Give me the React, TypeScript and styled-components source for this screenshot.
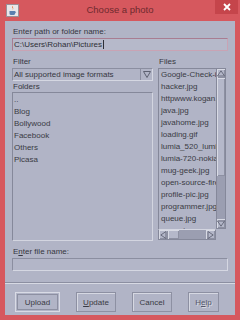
import React from 'react';
import styled, { createGlobalStyle } from 'styled-components';

const GlobalStyle = createGlobalStyle`
  html, body {
    margin: 0;
    padding: 0;
    background: #d6585e;
  }
  body {
    font-family: "Liberation Sans", Arial, sans-serif;
  }
`;

const folders = ['..', 'Blog', 'Bollywood', 'Facebook', 'Others', 'Picasa'];
const files = [
  'Google-Check-in.jpg',
  'hacker.jpg',
  'httpwww.kogan.jpg',
  'java.jpg',
  'javahome.jpg',
  'loading.gif',
  'lumia_520_lumia.jpg',
  'lumia-720-nokia.jpg',
  'mug-geek.jpg',
  'open-source-firefox.jpg',
  'profile-pic.jpg',
  'programmer.jpg',
  'queue.jpg',
  'regex.jpg',
];

const JavaIcon = () => (
  <svg width="13" height="13" viewBox="0 0 13 13">
    <rect x="0.5" y="0.5" width="12" height="12" fill="#e9e6ea" stroke="#9a8f98" />
    <path d="M6.5 2 C5 3.5 8 4 6.5 6 C7.8 5 7.2 3.8 6.5 2 Z" fill="#e2672c" />
    <path d="M3.5 7 H9 V9.5 Q9 11 7.5 11 H5 Q3.5 11 3.5 9.5 Z" fill="#5a7fb0" />
    <path d="M9 7.5 Q10.6 7.8 9 9.4" fill="none" stroke="#5a7fb0" strokeWidth="0.8" />
  </svg>
);

const App = () => {
  return (
    <Window>
      <GlobalStyle />
      <TitleBar>
        <IconSlot>
          <JavaIcon />
        </IconSlot>
        <Title>Choose a photo</Title>
        <CloseButton>
          <svg width="8" height="8" viewBox="0 0 8 8">
            <path d="M1 1 L7 7 M7 1 L1 7" stroke="#fff" strokeWidth="1.8" />
          </svg>
        </CloseButton>
      </TitleBar>

      <Body>
        <Form>
          <Label>Enter path or folder name:</Label>
          <PathInput>
            C:\Users\Rohan\Pictures<Caret />
          </PathInput>

          <Columns>
            <Column>
              <Label>Filter</Label>
              <Combo>
                <ComboText>All supported image formats</ComboText>
                <ComboArrow>
                  <svg width="8" height="7" viewBox="0 0 8 7">
                    <path d="M0.5 0.5 H7.5 L4 6.5 Z" fill="none" stroke="#5d6070" strokeWidth="1" />
                  </svg>
                </ComboArrow>
              </Combo>
              <Label>Folders</Label>
              <ListBox>
                {folders.map((f) => (
                  <Item key={f}>{f}</Item>
                ))}
              </ListBox>
            </Column>

            <Column>
              <Label>Files</Label>
              <FilesPane>
                <FileList>
                  {files.map((f) => (
                    <Item key={f}>{f}</Item>
                  ))}
                </FileList>
                <VScroll>
                  <ArrowBtn>
                    <svg width="8" height="7" viewBox="0 0 8 7">
                      <path d="M0.5 6 H7.5 L4 0.8 Z" fill="none" stroke="#6a6d7e" />
                    </svg>
                  </ArrowBtn>
                  <VThumb />
                  <Track />
                  <ArrowBtn>
                    <svg width="8" height="7" viewBox="0 0 8 7">
                      <path d="M0.5 1 H7.5 L4 6.2 Z" fill="none" stroke="#6a6d7e" />
                    </svg>
                  </ArrowBtn>
                </VScroll>
                <HScroll>
                  <ArrowBtn>
                    <svg width="7" height="8" viewBox="0 0 7 8">
                      <path d="M6 0.5 V7.5 L0.8 4 Z" fill="none" stroke="#6a6d7e" />
                    </svg>
                  </ArrowBtn>
                  <HThumb />
                  <Track />
                  <ArrowBtn>
                    <svg width="7" height="8" viewBox="0 0 7 8">
                      <path d="M1 0.5 V7.5 L6.2 4 Z" fill="none" stroke="#6a6d7e" />
                    </svg>
                  </ArrowBtn>
                </HScroll>
                <Corner />
              </FilesPane>
            </Column>
          </Columns>

          <FileLabel>
            E<u>n</u>ter file name:
          </FileLabel>
          <NameInput />
        </Form>

        <Separator />

        <ButtonRow>
          <Button $w={45} $focused>
            Upload
          </Button>
          <Button $w={40}>
            <u>U</u>pdate
          </Button>
          <Button $w={40}>Cancel</Button>
          <Button $w={31} $disabled>
            H<u>e</u>lp
          </Button>
        </ButtonRow>
      </Body>
    </Window>
  );
};

export default App;

const Window = styled.div`
  width: 240px;
  height: 320px;
  display: flex;
  flex-direction: column;
  background: #d6585e;
  overflow: hidden;
`;

const TitleBar = styled.div`
  height: 21px;
  display: flex;
  align-items: flex-start;
  position: relative;
  flex-shrink: 0;
`;

const IconSlot = styled.div`
  padding: 4px 0 0 6px;
  display: flex;
`;

const Title = styled.div`
  position: absolute;
  left: 0;
  right: 0;
  top: 4px;
  text-align: center;
  font-family: "Liberation Sans", Arial, sans-serif;
  font-size: 9.5px;
  color: #6e2a2e;
`;

const CloseButton = styled.div`
  margin-left: auto;
  margin-right: 2px;
  width: 23px;
  height: 14px;
  background: #c5454b;
  display: flex;
  align-items: center;
  justify-content: center;
`;

const Body = styled.div`
  flex: 1;
  margin: 0 5px 5px;
  background: #b1b4c6;
  display: flex;
  flex-direction: column;
  color: #36373f;
  font-size: 8px;
`;

const Form = styled.div`
  padding: 6px 7px 0 7px;
  display: flex;
  flex-direction: column;
`;

const Label = styled.div`
  height: 10px;
  line-height: 10px;
  padding-left: 1px;
  white-space: nowrap;
`;

const FileLabel = styled(Label)`
  margin-top: 6px;
  u {
    text-decoration-thickness: 1px;
  }
`;

const PathInput = styled.div`
  margin-top: 1px;
  height: 13px;
  box-sizing: border-box;
  border: 1px solid #a87d92;
  border-right-color: #c9a3b4;
  border-bottom-color: #c9a3b4;
  background: #b6b9ca;
  line-height: 11px;
  padding-left: 1px;
  display: flex;
  align-items: center;
  color: #2e2f36;
`;

const Caret = styled.span`
  display: inline-block;
  width: 1px;
  height: 9px;
  background: #2e2f36;
  margin-left: 1px;
`;

const NameInput = styled.div`
  margin-top: 1px;
  height: 13px;
  box-sizing: border-box;
  border: 1px solid #8b8ea0;
  border-right-color: #d5d7e2;
  border-bottom-color: #d5d7e2;
  background: #b3b6c8;
`;

const Columns = styled.div`
  margin-top: 6px;
  display: grid;
  grid-template-columns: 141px 68px;
  column-gap: 5px;
`;

const Column = styled.div`
  display: flex;
  flex-direction: column;
`;

const Combo = styled.div`
  height: 13px;
  box-sizing: border-box;
  border: 1px solid #8b8ea0;
  border-right-color: #d5d7e2;
  border-bottom-color: #d5d7e2;
  display: flex;
  align-items: center;
  margin-top: 1px;
  margin-bottom: 1px;
`;

const ComboText = styled.div`
  flex: 1;
  padding-left: 1px;
  white-space: nowrap;
  overflow: hidden;
`;

const ComboArrow = styled.div`
  width: 11px;
  height: 11px;
  border-left: 1px solid #8b8ea0;
  display: flex;
  align-items: center;
  justify-content: center;
`;

const ListBox = styled.div`
  height: 149px;
  box-sizing: border-box;
  border: 1px solid #85889a;
  border-right-color: #d3d5e0;
  border-bottom-color: #d3d5e0;
  padding-top: 1px;
  overflow: hidden;
`;

const Item = styled.div`
  height: 12px;
  line-height: 12px;
  padding-left: 1px;
  white-space: nowrap;
  color: #3a3b44;
`;

const FilesPane = styled.div`
  margin-top: 1px;
  height: 172px;
  display: grid;
  grid-template-columns: 1fr 10px;
  grid-template-rows: 1fr 11px;
`;

const FileList = styled.div`
  border: 1px solid #85889a;
  border-right: none;
  border-bottom: none;
  overflow: hidden;
  padding-left: 1px;
`;

const VScroll = styled.div`
  display: flex;
  flex-direction: column;
  background: #9b9eb1;
  border: 1px solid #85889a;
  box-sizing: border-box;
`;

const HScroll = styled.div`
  display: flex;
  flex-direction: row;
  background: #9b9eb1;
  border: 1px solid #85889a;
  border-top: 1px solid #d3d5e0;
  box-sizing: border-box;
`;

const Corner = styled.div`
  background: #b1b4c6;
`;

const ArrowBtn = styled.div`
  flex: 0 0 9px;
  min-width: 8px;
  min-height: 9px;
  background: #b3b6c8;
  display: flex;
  align-items: center;
  justify-content: center;
  box-shadow: inset 1px 1px #d8dae4, inset -1px -1px #8d90a2;
`;

const VThumb = styled.div`
  flex: 0 0 98px;
  background: #b5b8ca;
  box-shadow: inset 1px 1px #d8dae4, inset -1px -1px #8d90a2;
`;

const HThumb = styled.div`
  flex: 0 0 11px;
  background: #b5b8ca;
  box-shadow: inset 1px 1px #d8dae4, inset -1px -1px #8d90a2;
`;

const Track = styled.div`
  flex: 1;
`;

const Separator = styled.div`
  margin-top: 11px;
  height: 1px;
  background: #8c8fa1;
  border-bottom: 1px solid #d7d9e3;
`;

const ButtonRow = styled.div`
  display: flex;
  gap: 16px;
  padding: 8px 0 0 10px;
`;

const Button = styled.div<{ $w: number; $focused?: boolean; $disabled?: boolean }>`
  width: ${(p) => p.$w}px;
  height: 20px;
  box-sizing: border-box;
  display: flex;
  align-items: center;
  justify-content: center;
  font-size: 8px;
  color: ${(p) => (p.$disabled ? '#55586a' : '#3a3b44')};
  text-shadow: ${(p) => (p.$disabled ? '1px 1px #d8dae4' : 'none')};
  border: 1px solid ${(p) => (p.$focused ? '#d9dbe5' : '#8d90a2')};
  box-shadow: ${(p) =>
    p.$focused
      ? 'inset 0 0 0 1px #b1b4c6, inset 0 0 0 2px #8d90a2'
      : 'inset 1px 1px #d6d8e2'};
`;
